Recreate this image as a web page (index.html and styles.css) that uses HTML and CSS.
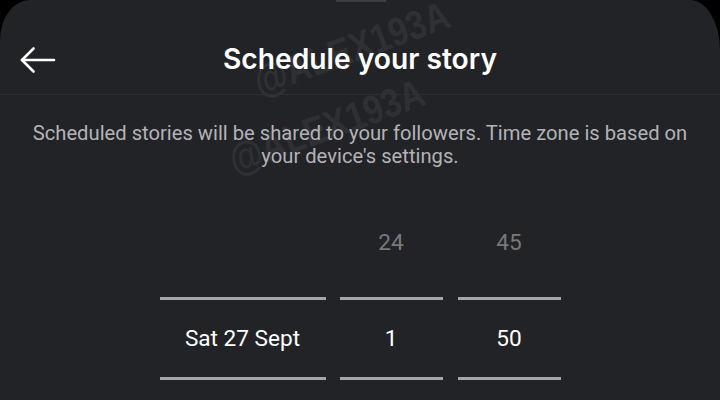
FILE: index.html
```html
<!DOCTYPE html>
<html>
<head>
<meta charset="utf-8">
<link rel="stylesheet" href="styles.css">
</head>
<body>
<div class="screen">
  <div class="handle"></div>
  <header class="header">
    <button class="back" aria-label="Back">
      <svg width="36" height="26" viewBox="0 0 36 26" fill="none" stroke="#ffffff" stroke-width="2.6" stroke-linecap="round" stroke-linejoin="round">
        <path d="M2 13 H34"/>
        <path d="M13.5 1.5 L2 13 L13.5 24.5"/>
      </svg>
    </button>
    <h1 class="title">Schedule your story</h1>
  </header>
  <p class="info">Scheduled stories will be shared to your followers. Time zone is based on<br>your device's settings.</p>
  <div class="picker">
    <div class="col col-date">
      <div class="item dim"></div>
      <div class="rule"></div>
      <div class="item sel">Sat 27 Sept</div>
      <div class="rule"></div>
    </div>
    <div class="col col-num">
      <div class="item dim">24</div>
      <div class="rule"></div>
      <div class="item sel">1</div>
      <div class="rule"></div>
    </div>
    <div class="col col-num">
      <div class="item dim">45</div>
      <div class="rule"></div>
      <div class="item sel">50</div>
      <div class="rule"></div>
    </div>
  </div>
  <div class="wm wm1">@ALEX193A</div>
  <div class="wm wm2">@ALEX193A</div>
</div>
</body>
</html>
```

FILE: styles.css
```css
html, body {
  margin: 0;
  padding: 0;
  background: #000000;
}
body {
  width: 720px;
  height: 400px;
  overflow: hidden;
}
.screen {
  position: relative;
  width: 720px;
  height: 400px;
  background: #222327;
  border-top-left-radius: 30px 40px;
  border-top-right-radius: 30px 50px;
  overflow: hidden;
  font-family: Roboto, "Liberation Sans", sans-serif;
}
.handle {
  position: absolute;
  left: 336px;
  top: 0;
  width: 50px;
  height: 2px;
  background: #3c3d41;
}
.header {
  height: 95px;
  border-bottom: 1px solid #2d2e32;
  display: flex;
  align-items: center;
  justify-content: center;
  position: relative;
  box-sizing: border-box;
}
.back {
  position: absolute;
  left: 20px;
  top: 47px;
  background: none;
  border: 0;
  padding: 0;
  width: 36px;
  height: 26px;
}
.back svg { display: block; }
.title {
  margin: 0;
  margin-top: 24px;
  font-family: Inter, "Noto Sans", sans-serif;
  font-weight: 600;
  font-size: 28.2px;
  color: #ffffff;
  position: relative;
  z-index: 2;
}
.info {
  margin: 27px 0 0 0;
  text-align: center;
  color: #b3b3b7;
  font-size: 20.2px;
  line-height: 23px;
  position: relative;
  z-index: 2;
}
.picker {
  margin-top: 47px;
  display: flex;
  justify-content: center;
  gap: 14px;
  position: relative;
  z-index: 2;
}
.col {
  display: flex;
  flex-direction: column;
}
.col-date { width: 166px; }
.col-num { width: 103px; }
.col-num + .col-num { margin-left: 1px; }
.item {
  display: flex;
  align-items: center;
  justify-content: center;
  font-size: 22.6px;
}
.dim {
  height: 54px;
  margin-bottom: 28px;
  color: #77787c;
}
.sel {
  height: 77px;
  color: #ffffff;
}
.rule {
  height: 3px;
  background: #a7a7aa;
}
.wm {
  position: absolute;
  font-family: "Liberation Sans", Arial, sans-serif;
  font-weight: 700;
  font-size: 40px;
  line-height: 40px;
  color: #2f3034;
  transform: rotate(-20deg) scaleX(0.85);
  transform-origin: left bottom;
  white-space: nowrap;
  z-index: 1;
}
.wm1 { left: 262px; top: 62px; }
.wm2 { left: 237px; top: 140px; }
```
